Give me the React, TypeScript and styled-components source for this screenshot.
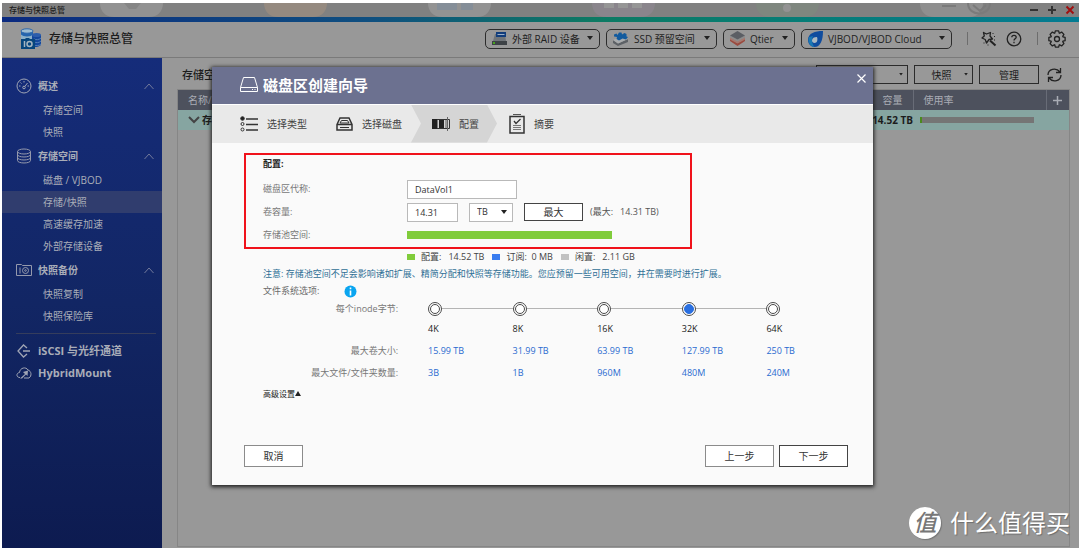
import React from "react";
import styled, { createGlobalStyle } from "styled-components";

const GlobalStyle = createGlobalStyle`
  * { box-sizing: border-box; }
  body {
    margin: 0;
    background: #fff;
    font-family: "Open Sans", "Noto Sans CJK SC", sans-serif;
    font-size: 10px;
    line-height: 14px;
    color: #1c1c1c;
  }
  button, input, select { font: inherit; color: inherit; margin: 0; }
  button { padding: 0; background: none; border: 0; cursor: pointer; }
  a { color: inherit; text-decoration: none; }
  h1, h2, h3, p, ul, fieldset { margin: 0; padding: 0; border: 0; list-style: none; }
  svg { display: block; flex: none; }
`;

/* ---------- window ---------- */

const Window = styled.div`
  position: relative;
  display: flex;
  flex-direction: column;
  min-height: calc(100vh - 5px);
  margin: 3px 1px 2px 2px;
  background: #989898;
`;

const TitleBar = styled.div`
  position: relative;
  overflow: hidden;
  display: flex;
  align-items: center;
  justify-content: space-between;
  height: 14px;
  padding: 0 4px 0 7px;
  background: #818181;
  font-size: 8px;
  line-height: 12px;
`;

const DesktopIcons = styled.svg`
  position: absolute;
  top: 0;
  left: 0;
`;

const TitleText = styled.span`
  position: relative;
  font-weight: 500;
`;

const WindowControls = styled.div`
  position: relative;
  display: flex;
  gap: 8px;
`;

const Stripe = styled.div`
  height: 5px;
  background: linear-gradient(90deg, #0b2a80 0%, #0f4f80 34%, #0d7a63 55%, #067d74 72%, #047b92 100%);
`;

const Header = styled.header`
  display: flex;
  align-items: center;
  height: 36px;
  padding: 0 13px 2px 18px;
  border-bottom: 1px solid #7a7a7a;
`;

const AppTitle = styled.h1`
  flex: 1;
  margin-left: 7px;
  font-size: 12px;
  line-height: 18px;
  font-weight: 500;
`;

const HeaderMenus = styled.div`
  display: flex;
  gap: 6px;
`;

const MenuButton = styled.button<{ $width: number }>`
  display: flex;
  align-items: center;
  gap: 5px;
  width: ${(p) => p.$width}px;
  height: 20px;
  padding: 0 6px;
  border: 1px solid #2c2c2c;
  border-radius: 5px;
  white-space: nowrap;
  color: #222;
`;

const MenuLabel = styled.span`
  flex: 1;
  text-align: left;
`;

const Separator = styled.span`
  width: 1px;
  height: 13px;
  margin: 0 10px 0 15px;
  background: #6d6d6d;
`;

const HeaderTools = styled.div`
  display: flex;
  gap: 9px;
  padding-left: 3px;
`;

const Body = styled.div`
  display: flex;
  flex: 1;
`;

/* ---------- sidebar ---------- */

const Sidebar = styled.nav`
  flex: none;
  width: 160px;
  padding-top: 15px;
  background: linear-gradient(#152c7a, #122664 50%, #0d1b50);
  color: #a9adb8;
`;

const GroupHeader = styled.button`
  display: flex;
  align-items: center;
  gap: 6px;
  width: 100%;
  height: 26px;
  padding: 0 8px 0 14px;
  font-weight: 700;
`;

const GroupTitle = styled.span`
  flex: 1;
  text-align: left;
`;

const NavLink = styled.a<{ $active?: boolean }>`
  display: block;
  height: 22px;
  padding-left: 41px;
  line-height: 22px;
  background: ${(p) => (p.$active ? "#303d6e" : "transparent")};
`;

const NavDivider = styled.hr`
  height: 1px;
  margin: 6px 6px 6px 14px;
  border: 0;
  background: #353d5c;
`;

const TopLink = styled.a`
  display: flex;
  align-items: center;
  gap: 6px;
  height: 22px;
  padding-left: 14px;
  font-weight: 700;
  font-size: 11px;
`;

/* ---------- main content ---------- */

const Main = styled.main`
  display: flex;
  flex-direction: column;
  flex: 1;
  min-width: 0;
  padding: 7px 9px 1px 15px;
`;

const Toolbar = styled.div`
  display: flex;
  align-items: center;
  gap: 6px;
  height: 19px;
  padding-right: 8px;
  margin-bottom: 5px;
`;

const SectionTitle = styled.h2`
  flex: 1;
  padding-left: 5px;
  font-size: 11px;
  line-height: 18px;
  font-weight: 500;
`;

const ToolButton = styled.button<{ $width: number }>`
  display: flex;
  align-items: center;
  justify-content: center;
  width: ${(p) => p.$width}px;
  height: 19px;
  padding: 0 4px;
  border: 1px solid #2b2b2b;
`;

const ToolLabel = styled.span`
  flex: 1;
  text-align: center;
`;

const RefreshButton = styled.button`
  margin-left: 2px;
`;

const TablePanel = styled.div`
  flex: 1;
  border: 1px solid #868686;
`;

const PoolTable = styled.table`
  width: 100%;
  border-collapse: collapse;
  table-layout: fixed;

  th {
    height: 20px;
    padding: 0 10px;
    background: #4d515d;
    border-right: 1px solid #686c77;
    color: #a9acb4;
    font-weight: 400;
    text-align: left;
  }
  th:last-child { border-right: 0; padding: 0 6px; }
  td {
    height: 20px;
    padding: 0;
    background: #86a5a1;
    font-weight: 700;
    white-space: nowrap;
  }
`;

const Column = styled.col<{ $width: number }>`
  width: ${(p) => p.$width}px;
`;

const PoolName = styled.span`
  display: flex;
  align-items: center;
  gap: 2px;
  padding-left: 10px;
`;

const Capacity = styled.td`
  text-align: right;
`;

const UsageTrack = styled.div`
  width: 114px;
  height: 6px;
  margin-left: 7px;
  border-left: 2px solid #4b8a1d;
  background: #757575;
`;

/* ---------- wizard ---------- */

const Overlay = styled.div`
  position: absolute;
  inset: 0;
  display: flex;
  align-items: center;
  justify-content: center;
  padding-left: 4px;
`;

const Dialog = styled.section`
  display: flex;
  flex-direction: column;
  width: 661px;
  max-width: 96%;
  min-height: 418px;
  background: #fafafa;
  box-shadow: 0 1px 4px 1px #1d1d1d;
  font-size: 9px;
  color: #6a6a6a;
`;

const DialogHeader = styled.header`
  display: flex;
  align-items: center;
  gap: 5px;
  height: 38px;
  padding: 0 7px 0 28px;
  background: #6c7190;
  border-bottom: 1px solid #fff;
  color: #fff;
`;

const DialogTitle = styled.h2`
  flex: 1;
  font-size: 15px;
  line-height: 20px;
  font-weight: 700;
`;

const CloseButton = styled.button`
  align-self: flex-start;
  padding: 7px 0;
`;

const Steps = styled.ul`
  display: flex;
  height: 38px;
  padding-left: 28px;
  background: #e9e9e9;
  font-size: 10px;
  color: #444;
`;

const Step = styled.li<{ $current?: boolean }>`
  display: flex;
  align-items: center;
  gap: 9px;
  padding: ${(p) => (p.$current ? "0 18px 0 21px" : "0")};
  margin: ${(p) => (p.$current ? "0 12px 0 9px" : "0")};
  background: ${(p) => (p.$current ? "#d5d5d5" : "transparent")};
  clip-path: ${(p) =>
    p.$current
      ? "polygon(0 0, calc(100% - 10px) 0, 100% 50%, calc(100% - 10px) 100%, 0 100%, 10px 50%)"
      : "none"};

  &:first-child { margin-right: 29px; }
`;

const Form = styled.form`
  display: flex;
  flex-direction: column;
  flex: 1;
  padding: 10px 25px 18px 32px;
`;

const Highlight = styled.fieldset`
  width: 448px;
  max-width: 100%;
  padding: 0 17px;
  border: 2px solid #f0121b;
`;

const FormTitle = styled.h3`
  height: 18px;
  margin-bottom: 5px;
  font-size: 9px;
  line-height: 18px;
  font-weight: 700;
  color: #222;
`;

const FieldRow = styled.div`
  display: flex;
  align-items: center;
  height: 23px;
  white-space: nowrap;
`;

const FieldLabel = styled.label`
  flex: none;
  width: 144px;
  color: #777;
`;

const TextBox = styled.input<{ $width: number }>`
  width: ${(p) => p.$width}px;
  height: 19px;
  padding: 0 7px;
  border: 1px solid #b9b9b9;
  background: #fff;
  color: #333;
`;

const UnitField = styled.span`
  display: grid;
  align-items: center;
  justify-items: end;
  margin: 0 11px;

  > * { grid-area: 1 / 1; }
  > svg { margin-right: 6px; pointer-events: none; }
`;

const UnitSelect = styled.select`
  appearance: none;
  width: 44px;
  height: 19px;
  padding: 0 7px;
  border: 1px solid #b9b9b9;
  border-radius: 0;
  background: #fff;
  color: #333;
`;

const Button = styled.button<{ $width: number; $tall?: boolean; $primary?: boolean }>`
  width: ${(p) => p.$width}px;
  height: ${(p) => (p.$tall ? 22 : 18)}px;
  border: 1px solid ${(p) => (p.$primary ? "#444" : "#8b8b8b")};
  background: #fff;
  font-size: 10px;
  color: #333;
`;

const Hint = styled.span`
  margin-left: 7px;
  white-space: pre;
  color: #555;
`;

const SpaceBar = styled.div`
  width: 205px;
  height: 8px;
  background: #80cc3b;
`;

const Legend = styled.div`
  display: flex;
  align-items: center;
  height: 16px;
  padding-left: 163px;
  color: #444;
  white-space: pre;
`;

const LegendItem = styled.span<{ $color: string }>`
  display: flex;
  align-items: center;
  gap: 6px;
  margin-right: 8px;

  &::before {
    content: "";
    width: 8px;
    height: 6px;
    background: ${(p) => p.$color};
  }
`;

const Note = styled.p`
  padding-left: 19px;
  line-height: 18px;
  color: #2f7096;
`;

const OptionsRow = styled.div`
  display: flex;
  align-items: center;
  gap: 25px;
  height: 17px;
  padding-left: 19px;
`;

const InodeTable = styled.table`
  width: 588px;
  max-width: 100%;
  margin-left: 19px;
  border-collapse: collapse;
  table-layout: fixed;

  th {
    padding: 0 30px 0 0;
    font-weight: 400;
    text-align: right;
    white-space: nowrap;
    color: #777;
  }
  th:first-child { width: 165px; }
  td {
    padding: 0;
    height: 22px;
    color: #2a6ad0;
    white-space: nowrap;
  }
  tr:first-child td { height: 18px; }
`;

const RadioCell = styled.span<{ $last: boolean }>`
  display: flex;
  align-items: center;

  &::after {
    content: "";
    flex: 1;
    height: 1px;
    background: ${(p) => (p.$last ? "transparent" : "#b4b4b4")};
  }
`;

const Radio = styled.input`
  appearance: none;
  display: grid;
  place-items: center;
  flex: none;
  width: 14px;
  height: 14px;
  margin: 0;
  border: 1px solid #4a4a4a;
  border-radius: 50%;
  background: #fff;

  &::before {
    content: "";
    width: 8px;
    height: 8px;
    border: 1px solid #4a4a4a;
    border-radius: 50%;
  }
  &:checked::before {
    border-color: #2a6fe0;
    background: #2a6fe0;
  }
`;

const SizeLabel = styled.label`
  color: #222;
`;

const Advanced = styled.button`
  align-self: flex-start;
  display: flex;
  align-items: center;
  height: 20px;
  margin-left: 19px;
  font-size: 8px;
  color: #222;
`;

const Footer = styled.footer`
  display: flex;
  gap: 5px;
  margin-top: auto;
`;

const FooterSpace = styled.span`
  flex: 1;
`;

/* ---------- watermark ---------- */

const Watermark = styled.div`
  position: absolute;
  right: 9px;
  bottom: 8px;
  display: flex;
  align-items: center;
  gap: 9px;
  font-size: 24px;
  line-height: 34px;
  color: #fff;
  text-shadow: 1px 1px 1px #6d6d6d;
`;

const Seal = styled.span`
  width: 32px;
  height: 32px;
  border-radius: 50%;
  background: #fff;
  box-shadow: 1px 1px 1px #777;
  font-size: 23px;
  font-style: italic;
  font-weight: 500;
  line-height: 31px;
  text-align: center;
  color: #777;
  text-shadow: none;
`;

/* ---------- icons ---------- */

const Caret = ({ size = 6, up = false }: { size?: number; up?: boolean }) => (
  <svg width={size} height={size - 1} viewBox="0 0 6 5" aria-hidden="true">
    <path d={up ? "M0 5h6L3 0z" : "M0 0h6L3 4z"} fill="#222" />
  </svg>
);

const Chevron = () => (
  <svg width="10" height="7" viewBox="0 0 10 7" fill="none" stroke="#727a9c" aria-hidden="true">
    <path d="M.5 6 5 1l4.500 5" />
  </svg>
);

const AppLogo = () => (
  <svg width="22" height="22" viewBox="0 0 22 22" aria-hidden="true">
    <path d="M1 3v8h12V3z" fill="#8bb0c8" />
    <path d="M1 3.500v3c2 2.500 10 2.500 12 0v-3z" fill="#2465ae" />
    <ellipse cx="7" cy="3" rx="6" ry="2.200" fill="#9dbdd2" stroke="#2d68ac" />
    <path d="M12 7v11c2 2 7 1 9-1V7z" fill="#12469b" />
    <ellipse cx="16.500" cy="7" rx="4.500" ry="2" fill="#2b5dac" />
    <path d="M14 11c2 1 5 1 7-1m-7 4c2 1 5 1 7-1m-7 4c2 1 5 1 7-1" stroke="#5580b9" fill="none" />
    <path d="M1 11h4l1-1h3l1 1h5v10H1z" fill="#07467d" />
    <path d="M4.500 13v6" stroke="#a5b5c0" strokeWidth="1.500" />
    <circle cx="9.500" cy="16" r="2.500" fill="none" stroke="#a5b5c0" strokeWidth="1.500" />
  </svg>
);

const RaidIcon = () => (
  <svg width="15" height="14" viewBox="0 0 15 14" aria-hidden="true">
    <path d="m3 2-2 7h13l-1-7z" fill="#70757a" />
    <path d="M0 9h15v4H0z" fill="#3d4246" />
    <path d="M4 0h10v5H4z" fill="#123d7c" />
    <path d="M5.500 2.500h7" stroke="#9db0c8" />
    <path d="M1 11h2" stroke="#47a51d" strokeWidth="2" />
  </svg>
);

const SsdIcon = () => (
  <svg width="16" height="14" viewBox="0 0 16 14" aria-hidden="true">
    <path d="m0 8 5 3.500L15 7v3L5 14l-5-3z" fill="#5d6166" />
    <path d="m0 8 9-4 6 3-10 4.500z" fill="#a8abad" />
    <path d="M1 2.500 3.500 1.500 4.500 3 6 .5h2.500L9 2.500 11.500 1l2 1v2.500L15 5l-2 2.500-3.500-1L6 8.500 3.500 7 4 5 1 4.500z" fill="#135b9e" />
  </svg>
);

const QtierIcon = () => (
  <svg width="15" height="15" viewBox="0 0 15 15" aria-hidden="true">
    <path d="m0 7.500 7.500 4.500L15 7.500v2.500l-7.500 5L0 10z" fill="#9a4a3f" />
    <path d="m0 6 7.500 4L15 6v2.500l-7.500 4L0 8.500z" fill="#a5786f" />
    <path d="m0 4.500 7.500 4 7.500-4v2l-7.500 4-7.500-4z" fill="#8c8c8c" />
    <path d="M7.500 0 15 4.500l-7.500 4-7.500-4z" fill="#5b5e64" />
  </svg>
);

const CloudDropIcon = () => (
  <svg width="15" height="16" viewBox="0 0 15 16" aria-hidden="true">
    <path d="M15 0C7 0 0 2 0 9c0 4 3 7 6.500 7C12 16 15 10 15 0z" fill="#104c9e" />
    <path d="M1 6c-2 6 2 10 5.500 10C4 13 3 9 5 5z" fill="#1a78b3" />
    <path d="M9 6c-3 0-5 1-5 3.500C4 11 5 12 6.500 12 9 12 10 9 9 6z" fill="#abb9c2" />
  </svg>
);

const WandIcon = () => (
  <svg width="16" height="16" viewBox="0 0 16 16" fill="none" stroke="#222" strokeWidth="1.300" aria-hidden="true">
    <path d="M2.500 1.500 5.500 3 9.500 1.500 9 5l2.500 3-3.500.5L5.500 12 4.200 8.500 1 7l2.300-2z" strokeLinejoin="round" />
    <path d="m9 9.500 5.500 5" strokeWidth="2" />
    <path d="M11.500 2.500h1M13 5.500h1M2.500 12h1M6.500 14h1M13 9h1" strokeWidth="1" />
  </svg>
);

const HelpIcon = () => (
  <svg width="16" height="16" viewBox="0 0 16 16" fill="none" stroke="#222" strokeWidth="1.300" aria-hidden="true">
    <circle cx="8" cy="8" r="6.800" />
    <path d="M5.800 6.300C5.800 3.600 10.200 3.700 10.200 6.200 10.200 7.800 8 7.900 8 9.600" />
    <path d="M8 10.800v1.500" />
  </svg>
);

const gearPath = Array.from({ length: 8 }, (_, i) =>
  [[-0.36, 6.3], [-0.2, 8.3], [0.2, 8.3], [0.36, 6.3]].map(([offset, radius]) => {
    const angle = (i * Math.PI) / 4 + offset;
    return `${(9 + radius * Math.sin(angle)).toFixed(2)} ${(9 - radius * Math.cos(angle)).toFixed(2)}`;
  }).join(" L"),
).join(" L");

const GearIcon = () => (
  <svg width="18" height="18" viewBox="0 0 18 18" fill="none" stroke="#222" strokeWidth="1.300" strokeLinejoin="round" aria-hidden="true">
    <path d={`M${gearPath}Z`} />
    <circle cx="9" cy="9" r="2.500" />
  </svg>
);

const RefreshIcon = () => (
  <svg width="15" height="16" viewBox="0 0 15 16" fill="none" stroke="#222" strokeWidth="1.300" aria-hidden="true">
    <path d="M1 8C1 2 9 0 13 5M13.500 1v4.500H9M14 8c0 6-8 8-12 3M1.500 15v-4.500H6" />
  </svg>
);

const GaugeIcon = () => (
  <svg width="16" height="16" viewBox="0 0 16 16" fill="none" stroke="#a0a5b5" aria-hidden="true">
    <circle cx="8" cy="8" r="7" />
    <circle cx="8" cy="9.500" r="1.300" />
    <path d="m8.800 8.500 2.700-3.500M3 8h1.500M4.500 4.500l1 1M8 3v1.500M11.500 8H13" />
  </svg>
);

const DisksIcon = () => (
  <svg width="16" height="16" viewBox="0 0 16 16" fill="none" stroke="#9499ac" aria-hidden="true">
    <ellipse cx="8" cy="3.500" rx="6.500" ry="2.500" />
    <path d="M1.500 3.500v9c0 3.300 13 3.300 13 0v-9M1.500 6.500c0 3.300 13 3.300 13 0M1.500 9.500c0 3.300 13 3.300 13 0" />
  </svg>
);

const SnapshotIcon = () => (
  <svg width="16" height="14" viewBox="0 0 16 14" fill="none" stroke="#9499ac" aria-hidden="true">
    <path d="M.5 1.500h5l1 1h9v10H.5zM4 4.500v6" />
    <circle cx="9.500" cy="7.500" r="3" />
    <circle cx="9.500" cy="7.500" r=".8" />
  </svg>
);

const IscsiIcon = () => (
  <svg width="16" height="14" viewBox="0 0 16 14" fill="none" stroke="#a0a5b5" strokeWidth="1.300" aria-hidden="true">
    <path d="M11 4 7.500 1 2 7l5.500 6L11 10M7 7h7" />
  </svg>
);

const MountIcon = () => (
  <svg width="16" height="14" viewBox="0 0 16 14" fill="none" stroke="#a0a5b5" aria-hidden="true">
    <path d="M4 11.500C0 11.500 0 7 3.500 6.500 4 1.500 10 .5 12 4c3.500 1 4 6 1 8H8" />
    <path d="M4 12.500 9 8 7 6l5-1.500-.5 5.500-1.500-1.500-4 4z" fill="#a0a5b5" stroke="none" />
  </svg>
);

const DriveIcon = () => (
  <svg width="18" height="16" viewBox="0 0 18 16" fill="none" stroke="#fff" aria-hidden="true">
    <path d="M.5 10.500 3.500.5h11l3 10v4H.5zM.5 10.500h17M12 12.500h1M14.500 12.500h1" />
  </svg>
);

const TypeIcon = () => (
  <svg width="18" height="16" viewBox="0 0 18 16" fill="none" stroke="#333" aria-hidden="true">
    <circle cx="2.500" cy="2.500" r="1.800" fill="#222" />
    <circle cx="2.500" cy="8" r="1.500" />
    <circle cx="2.500" cy="13.500" r="1.500" />
    <path d="M6 3h12M6 8.500h12M6 14h12" strokeWidth="1.500" />
  </svg>
);

const SelectDiskIcon = () => (
  <svg width="17" height="14" viewBox="0 0 17 14" fill="none" stroke="#333" strokeWidth="1.500" aria-hidden="true">
    <path d="M1 7.500 4 1h9l3 6.500V13H1zM1 7.500h15" />
    <path d="M5.500 3.500h6L13 6H4zM4 10.500h9" strokeWidth="1" />
  </svg>
);

const ConfigIcon = () => (
  <svg width="18" height="14" viewBox="0 0 18 14" aria-hidden="true">
    <path d="M0 2h5.500v10H0zM7 2h5v10H7z" fill="#222" />
    <path d="M5 2.500h12.500v9H5" fill="none" stroke="#333" />
    <path d="M13 3h2v8h-2z" fill="#999" />
    <path d="M15.500 0v14" stroke="#666" />
  </svg>
);

const SummaryIcon = () => (
  <svg width="16" height="20" viewBox="0 0 16 20" fill="none" stroke="#333" aria-hidden="true">
    <path d="M1 2.500h14v16.500H1z" strokeWidth="1.500" />
    <path d="M4 .5h8" stroke="#555" />
    <path d="M4 11.500h8M4 13.500h8M4 15.500h8" stroke="#777" />
    <path d="m5 7 2 2.500L11.500 5" strokeWidth="1.300" />
  </svg>
);

const InfoIcon = () => (
  <svg width="13" height="13" viewBox="0 0 13 13" aria-hidden="true">
    <circle cx="6.500" cy="6.500" r="6" fill="#0aa5f0" />
    <path d="M6.500 2.500v1.700M6.500 5.500v5" stroke="#fff" strokeWidth="1.600" />
  </svg>
);

/* ---------- data ---------- */

const groups = [
  { title: "概述", icon: <GaugeIcon />, items: ["存储空间", "快照"] },
  { title: "存储空间", icon: <DisksIcon />, items: ["磁盘 / VJBOD", "存储/快照", "高速缓存加速", "外部存储设备"] },
  { title: "快照备份", icon: <SnapshotIcon />, items: ["快照复制", "快照保险库"] },
];

const menus = [
  { label: "外部 RAID 设备", icon: <RaidIcon />, width: 115 },
  { label: "SSD 预留空间", icon: <SsdIcon />, width: 111 },
  { label: "Qtier", icon: <QtierIcon />, width: 72 },
  { label: "VJBOD/VJBOD Cloud", icon: <CloudDropIcon />, width: 151 },
];

const inodes = [
  { size: "4K", volume: "15.99 TB", files: "3B" },
  { size: "8K", volume: "31.99 TB", files: "1B" },
  { size: "16K", volume: "63.99 TB", files: "960M" },
  { size: "32K", volume: "127.99 TB", files: "480M" },
  { size: "64K", volume: "250 TB", files: "240M" },
];

export default function App() {
  return (
    <>
      <GlobalStyle />
      <Window>
        <TitleBar>
          <DesktopIcons width="1077" height="14" viewBox="0 0 1077 14" aria-hidden="true">
            <path d="M98 0h63c0 8-5 14-14 14h-35c-9 0-14-6-14-14z" fill="#929292" />
            <path d="M122 0h17l-5 6h-7z" fill="#858585" />
            <path d="M262 0h63c0 8-5 14-14 14h-35c-9 0-14-6-14-14z" fill="#958a80" />
            <path d="M426 0h63c0 8-5 14-14 14h-35c-9 0-14-6-14-14z" fill="#939393" />
            <path d="M435 0h20v7h-20zM459 0h12v7h-12z" fill="#858e98" />
            <path d="M590 0h63c0 8-5 14-14 14h-35c-9 0-14-6-14-14z" fill="#8a858c" />
            <path d="M602 0h10v5h-10zM616 0h10v5h-10zM630 0h10v5h-10z" fill="#969696" />
            <path d="M754 0h63c0 8-5 14-14 14h-35c-9 0-14-6-14-14z" fill="#7f877f" />
            <circle cx="785" cy="5" r="4" fill="#939393" />
            <path d="M918 0h63c0 8-5 14-14 14h-35c-9 0-14-6-14-14z" fill="#8f8f8f" />
            <path d="M940 3h14M966 0c0 14 22 14 22 0M971 2l7 6 6-6" fill="none" stroke="#7b7b7b" strokeWidth="2" />
          </DesktopIcons>
          <TitleText>存储与快照总管</TitleText>
          <WindowControls>
            <button aria-label="最小化">
              <svg width="10" height="10" viewBox="0 0 10 10" stroke="#333" strokeWidth="2"><path d="M1 5h8" /></svg>
            </button>
            <button aria-label="最大化">
              <svg width="10" height="10" viewBox="0 0 10 10" stroke="#333" strokeWidth="2"><path d="M1 5h8M5 1v8" /></svg>
            </button>
            <button aria-label="关闭">
              <svg width="10" height="10" viewBox="0 0 10 10" stroke="#a01010" strokeWidth="2"><path d="m1.500 1.500 7 7m0-7-7 7" /></svg>
            </button>
          </WindowControls>
        </TitleBar>
        <Stripe />
        <Header>
          <AppLogo />
          <AppTitle>存储与快照总管</AppTitle>
          <HeaderMenus>
            {menus.map((m) => (
              <MenuButton key={m.label} $width={m.width} aria-haspopup="menu">
                {m.icon}
                <MenuLabel>{m.label}</MenuLabel>
                <Caret />
              </MenuButton>
            ))}
          </HeaderMenus>
          <Separator />
          <HeaderTools>
            <button aria-label="工具"><WandIcon /></button>
            <button aria-label="帮助"><HelpIcon /></button>
          </HeaderTools>
          <Separator />
          <button aria-label="设置"><GearIcon /></button>
        </Header>

        <Body>
          <Sidebar>
            {groups.map((g) => (
              <div key={g.title}>
                <GroupHeader>
                  {g.icon}
                  <GroupTitle>{g.title}</GroupTitle>
                  <Chevron />
                </GroupHeader>
                {g.items.map((item) => (
                  <NavLink key={item} href="#" $active={item === "存储/快照"}>{item}</NavLink>
                ))}
              </div>
            ))}
            <NavDivider />
            <TopLink href="#"><IscsiIcon />iSCSI 与光纤通道</TopLink>
            <TopLink href="#"><MountIcon />HybridMount</TopLink>
          </Sidebar>

          <Main>
            <Toolbar>
              <SectionTitle>存储空间</SectionTitle>
              <ToolButton $width={92}><ToolLabel>创建</ToolLabel><Caret size={4} /></ToolButton>
              <ToolButton $width={59}><ToolLabel>快照</ToolLabel><Caret size={4} /></ToolButton>
              <ToolButton $width={60}><ToolLabel>管理</ToolLabel></ToolButton>
              <RefreshButton aria-label="刷新"><RefreshIcon /></RefreshButton>
            </Toolbar>
            <TablePanel>
              <PoolTable>
                <colgroup>
                  <col />
                  <Column $width={41} />
                  <Column $width={133} />
                  <Column $width={23} />
                </colgroup>
                <thead>
                  <tr><th>名称/别名</th><th>容量</th><th>使用率</th><th>
                    <svg width="9" height="9" viewBox="0 0 9 9" stroke="#a9acb4" strokeWidth="1.500"><path d="M0 4.500h9M4.500 0v9" /></svg>
                  </th></tr>
                </thead>
                <tbody>
                  <tr>
                    <td>
                      <PoolName>
                        <svg width="12" height="8" viewBox="0 0 12 8" fill="none" stroke="#444" strokeWidth="2"><path d="m1 1 5 5 5-5" /></svg>
                        存储池 1
                      </PoolName>
                    </td>
                    <Capacity>14.52 TB</Capacity>
                    <td><UsageTrack /></td>
                    <td />
                  </tr>
                </tbody>
              </PoolTable>
            </TablePanel>
          </Main>
        </Body>

        <Overlay>
          <Dialog role="dialog" aria-labelledby="wizard-title">
            <DialogHeader>
              <DriveIcon />
              <DialogTitle id="wizard-title">磁盘区创建向导</DialogTitle>
              <CloseButton aria-label="关闭向导">
                <svg width="9" height="9" viewBox="0 0 9 9" stroke="#fff" strokeWidth="1.200"><path d="m.5.5 8 8m0-8-8 8" /></svg>
              </CloseButton>
            </DialogHeader>
            <Steps>
              <Step><TypeIcon />选择类型</Step>
              <Step><SelectDiskIcon />选择磁盘</Step>
              <Step $current aria-current="step"><ConfigIcon />配置</Step>
              <Step><SummaryIcon />摘要</Step>
            </Steps>
            <Form onSubmit={(e) => e.preventDefault()}>
              <Highlight>
                <FormTitle>配置:</FormTitle>
                <FieldRow>
                  <FieldLabel htmlFor="alias">磁盘区代称:</FieldLabel>
                  <TextBox id="alias" $width={110} defaultValue="DataVol1" />
                </FieldRow>
                <FieldRow>
                  <FieldLabel htmlFor="capacity">卷容量:</FieldLabel>
                  <TextBox id="capacity" $width={51} defaultValue="14.31" />
                  <UnitField>
                    <UnitSelect aria-label="单位" defaultValue="TB">
                      <option>TB</option>
                    </UnitSelect>
                    <Caret />
                  </UnitField>
                  <Button type="button" $width={59} $primary>最大</Button>
                  <Hint>(最大:   14.31 TB)</Hint>
                </FieldRow>
                <FieldRow>
                  <FieldLabel as="span">存储池空间:</FieldLabel>
                  <SpaceBar />
                </FieldRow>
              </Highlight>
              <Legend>
                <LegendItem $color="#80cc3b">配置:   14.52 TB</LegendItem>
                <LegendItem $color="#3a7df0">订阅:  0 MB</LegendItem>
                <LegendItem $color="#c2c2c2">闲置:   2.11 GB</LegendItem>
              </Legend>
              <Note>注意: 存储池空间不足会影响诸如扩展、精简分配和快照等存储功能。您应预留一些可用空间，并在需要时进行扩展。</Note>
              <OptionsRow>文件系统选项:<InfoIcon /></OptionsRow>
              <InodeTable>
                <tbody>
                  <tr>
                    <th scope="row">每个inode字节:</th>
                    {inodes.map((n, i) => (
                      <td key={n.size}>
                        <RadioCell $last={i === inodes.length - 1}>
                          <Radio type="radio" name="inode" id={n.size} defaultChecked={n.size === "32K"} />
                        </RadioCell>
                      </td>
                    ))}
                  </tr>
                  <tr>
                    <th />
                    {inodes.map((n) => (
                      <td key={n.size}><SizeLabel htmlFor={n.size}>{n.size}</SizeLabel></td>
                    ))}
                  </tr>
                  <tr>
                    <th scope="row">最大卷大小:</th>
                    {inodes.map((n) => <td key={n.size}>{n.volume}</td>)}
                  </tr>
                  <tr>
                    <th scope="row">最大文件/文件夹数量:</th>
                    {inodes.map((n) => <td key={n.size}>{n.files}</td>)}
                  </tr>
                </tbody>
              </InodeTable>
              <Advanced type="button">高级设置<Caret up /></Advanced>
              <Footer>
                <Button type="button" $width={59} $tall>取消</Button>
                <FooterSpace />
                <Button type="button" $width={69} $tall>上一步</Button>
                <Button type="submit" $width={69} $tall $primary>下一步</Button>
              </Footer>
            </Form>
          </Dialog>
        </Overlay>

        <Watermark><Seal>值</Seal>什么值得买</Watermark>
      </Window>
    </>
  );
}
